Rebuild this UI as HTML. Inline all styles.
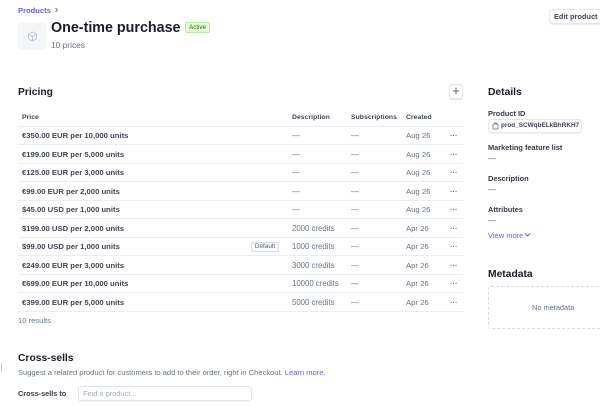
<!DOCTYPE html>
<html><head><meta charset="utf-8">
<style>
html,body{margin:0;padding:0;background:#fff}
body{width:600px;height:406px;overflow:hidden;position:relative;font-family:"Liberation Sans",sans-serif;color:#30313d}
.a{position:absolute;white-space:nowrap;line-height:12px}
.p{left:22px;font-size:7.7px;font-weight:700;color:#414552}
.d{left:292px;font-size:7.8px;color:#687385}
.s{left:351px;font-size:7.8px;color:#687385}
.c{left:406px;font-size:7.7px;color:#687385}
.m{left:450px;font-size:7.5px;color:#687385;font-weight:700}
.l{position:absolute;left:18px;width:445px;height:1px;background:#ebeef1}
.h{font-size:6.8px;font-weight:700;color:#414552;letter-spacing:.05px}
.t{font-size:10.3px;font-weight:700;color:#1a1b25}
.k{left:488px;font-size:7.4px;font-weight:700;color:#353a44}
.v{left:488px;font-size:8px;color:#596171}
</style></head><body>
<div class="a" style="left:18px;top:4.5px;font-size:7.6px;font-weight:700;color:#635bff">Products</div>
<svg class="a" style="left:54px;top:7px" width="5" height="6" viewBox="0 0 5 6"><path d="M1.5 1 L3.5 3 L1.5 5" fill="none" stroke="#687385" stroke-width="1"/></svg>
<div class="a" style="left:18px;top:23px;width:28px;height:27px;background:#f5f6f8;border-radius:3px"></div>
<svg class="a" style="left:27px;top:31px" width="11" height="11" viewBox="0 0 11 11"><path d="M5.5 1 L9.5 3.2 V7.8 L5.5 10 L1.5 7.8 V3.2 Z M1.5 3.2 L5.5 5.5 L9.5 3.2 M5.5 5.5 V10" fill="none" stroke="#c0c8d2" stroke-width=".9"/></svg>
<div class="a" style="left:51px;top:19px;font-size:14.3px;line-height:18px;font-weight:700;color:#1a1b25">One-time purchase</div>
<div class="a" style="left:185px;top:22px;width:25px;height:11px;box-sizing:border-box;background:#e8f9dc;border:1px solid #b8eba0;border-radius:2px;font-size:6.2px;line-height:9px;text-align:center;color:#217005">Active</div>
<div class="a" style="left:51px;top:39px;font-size:8.4px;color:#687385">10 prices</div>
<div class="a" style="left:549px;top:9px;width:60px;height:15px;box-sizing:border-box;background:#fff;border:1px solid #e3e6ea;border-radius:4px;box-shadow:0 1px 1px rgba(0,0,0,.08);font-size:7.4px;line-height:13px;font-weight:700;color:#414552;padding-left:4px">Edit product</div>

<div class="a t" style="left:18px;top:87px">Pricing</div>
<div class="a" style="left:449px;top:84px;width:14px;height:15px;box-sizing:border-box;background:#fff;border:1px solid #e3e6ea;border-radius:3px;box-shadow:0 1px 1px rgba(0,0,0,.1)"></div>
<svg class="a" style="left:452px;top:87px" width="8" height="8" viewBox="0 0 8 8"><path d="M4 .8 V7.2 M.8 4 H7.2" stroke="#414552" stroke-width=".8"/></svg>

<div class="a h" style="left:22px;top:112px">Price</div>
<div class="a h" style="left:292px;top:112px">Description</div>
<div class="a h" style="left:351px;top:112px">Subscriptions</div>
<div class="a h" style="left:406px;top:112px">Created</div>

<div class="l" style="top:126px"></div>
<div class="l" style="top:144px"></div>
<div class="l" style="top:163px"></div>
<div class="l" style="top:181px"></div>
<div class="l" style="top:200px"></div>
<div class="l" style="top:218px"></div>
<div class="l" style="top:237px"></div>
<div class="l" style="top:255px"></div>
<div class="l" style="top:274px"></div>
<div class="l" style="top:292px"></div>
<div class="l" style="top:311px"></div>

<div class="a p" style="top:130px">€350.00 EUR per 10,000 units</div><div class="a d" style="top:130px">—</div><div class="a s" style="top:130px">—</div><div class="a c" style="top:130px">Aug 26</div><div class="a m" style="top:130px">···</div>
<div class="a p" style="top:149px">€199.00 EUR per 5,000 units</div><div class="a d" style="top:149px">—</div><div class="a s" style="top:149px">—</div><div class="a c" style="top:149px">Aug 26</div><div class="a m" style="top:149px">···</div>
<div class="a p" style="top:167px">€125.00 EUR per 3,000 units</div><div class="a d" style="top:167px">—</div><div class="a s" style="top:167px">—</div><div class="a c" style="top:167px">Aug 26</div><div class="a m" style="top:167px">···</div>
<div class="a p" style="top:186px">€99.00 EUR per 2,000 units</div><div class="a d" style="top:186px">—</div><div class="a s" style="top:186px">—</div><div class="a c" style="top:186px">Aug 26</div><div class="a m" style="top:186px">···</div>
<div class="a p" style="top:204px">$45.00 USD per 1,000 units</div><div class="a d" style="top:204px">—</div><div class="a s" style="top:204px">—</div><div class="a c" style="top:204px">Aug 26</div><div class="a m" style="top:204px">···</div>
<div class="a p" style="top:223px">$199.00 USD per 2,000 units</div><div class="a d" style="top:223px">2000 credits</div><div class="a s" style="top:223px">—</div><div class="a c" style="top:223px">Apr 26</div><div class="a m" style="top:223px">···</div>
<div class="a p" style="top:241px">$99.00 USD per 1,000 units</div><div class="a d" style="top:241px">1000 credits</div><div class="a s" style="top:241px">—</div><div class="a c" style="top:241px">Apr 26</div><div class="a m" style="top:241px">···</div>
<div class="a" style="left:251px;top:242px;width:28px;height:10px;box-sizing:border-box;border:1px solid #d8dee4;border-radius:2px;background:#f9fafb;font-size:6.4px;line-height:8px;text-align:center;color:#596171">Default</div>
<div class="a p" style="top:260px">€249.00 EUR per 3,000 units</div><div class="a d" style="top:260px">3000 credits</div><div class="a s" style="top:260px">—</div><div class="a c" style="top:260px">Apr 26</div><div class="a m" style="top:260px">···</div>
<div class="a p" style="top:278px">€699.00 EUR per 10,000 units</div><div class="a d" style="top:278px">10000 credits</div><div class="a s" style="top:278px">—</div><div class="a c" style="top:278px">Apr 26</div><div class="a m" style="top:278px">···</div>
<div class="a p" style="top:297px">€399.00 EUR per 5,000 units</div><div class="a d" style="top:297px">5000 credits</div><div class="a s" style="top:297px">—</div><div class="a c" style="top:297px">Apr 26</div><div class="a m" style="top:297px">···</div>

<div class="a" style="left:18px;top:315px;font-size:7.6px;color:#687385">10 results</div>

<div class="a t" style="left:18px;top:353px">Cross-sells</div>
<div class="a" style="left:18px;top:367px;font-size:7.55px;color:#687385">Suggest a related product for customers to add to their order, right in Checkout. <span style="color:#635bff">Learn more.</span></div>
<div class="a" style="left:18px;top:388px;font-size:7.3px;font-weight:700;color:#353a44">Cross-sells to</div>
<div class="a" style="left:78px;top:386px;width:174px;height:15px;box-sizing:border-box;border:1px solid #e3e6ea;border-radius:3px;box-shadow:0 1px 1px rgba(0,0,0,.05);font-size:7.4px;line-height:13px;color:#a3acba;padding-left:4px">Find a product...</div>
<div class="a" style="left:1px;top:363px;width:1px;height:9px;background:#c8ccd2"></div>

<div class="a t" style="left:488px;top:87px">Details</div>
<div class="a k" style="top:108px">Product ID</div>
<div class="a" style="left:488px;top:119px;width:94px;height:14px;box-sizing:border-box;border:1px solid #e3e6ea;border-radius:4px;box-shadow:0 1px 1px rgba(0,0,0,.05)"></div>
<svg class="a" style="left:492px;top:122px" width="7" height="8" viewBox="0 0 7 8"><path d="M1 2 H6 V7 H1 Z M2.5 2 V1 H4.5 V2" fill="none" stroke="#687385" stroke-width=".8"/></svg>
<div class="a" style="left:501px;top:120px;font-size:6.4px;font-weight:700;color:#414552">prod_SCWqbELkBhRKH7</div>
<div class="a k" style="top:142px">Marketing feature list</div>
<div class="a v" style="top:153px">—</div>
<div class="a k" style="top:173px">Description</div>
<div class="a v" style="top:184px">—</div>
<div class="a k" style="top:204px">Attributes</div>
<div class="a v" style="top:215px">—</div>
<div class="a" style="left:488px;top:230px;font-size:7.5px;color:#635bff">View more</div>
<svg class="a" style="left:524px;top:232px" width="7" height="6" viewBox="0 0 7 6"><path d="M1 1.5 L3.5 4 L6 1.5" fill="none" stroke="#635bff" stroke-width="1"/></svg>
<div class="a t" style="left:488px;top:269px">Metadata</div>
<div class="a" style="left:488px;top:286px;width:130px;height:43px;box-sizing:border-box;border:1px dashed #d5dbe1;border-radius:3px"></div>
<div class="a" style="left:532px;top:302px;font-size:7.4px;color:#687385">No metadata</div>
</body></html>
